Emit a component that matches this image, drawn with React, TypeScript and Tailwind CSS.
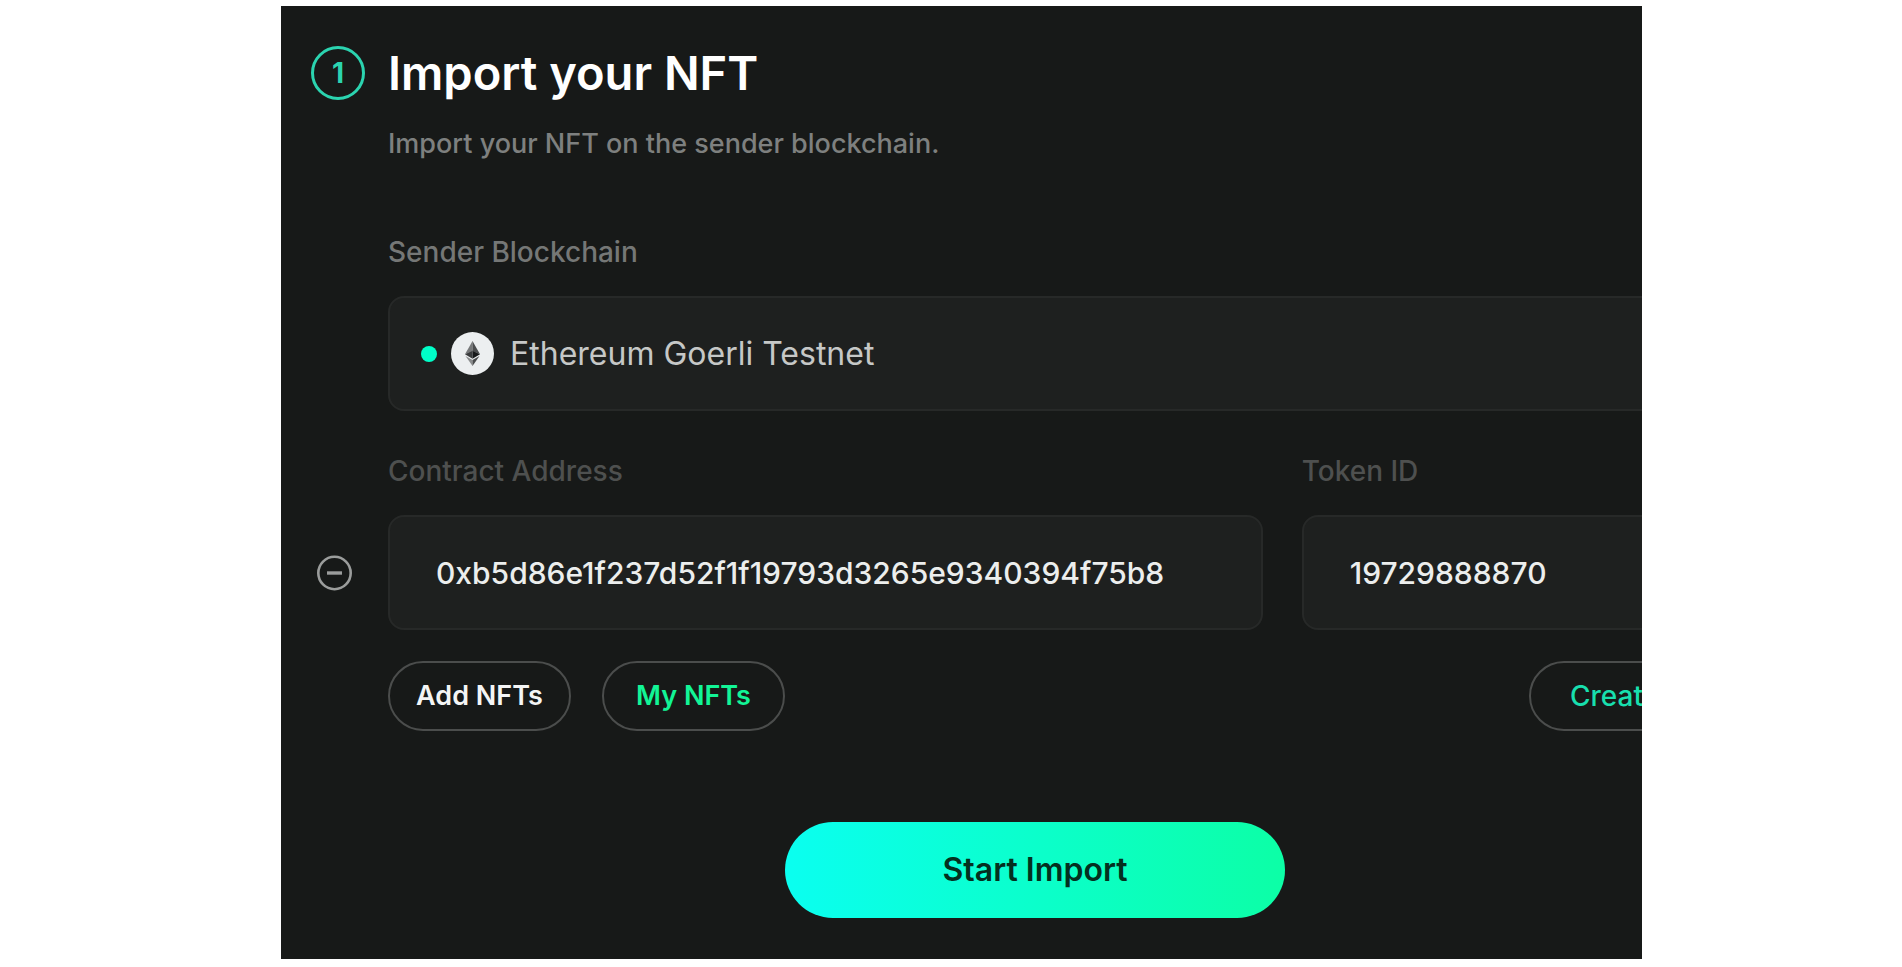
import { useState } from 'react'
import type { ReactNode } from 'react'

const FIELD = 'h-[115px] w-full rounded-2xl border-2 border-[#272928] bg-[#1e201f]'

interface TextFieldProps {
  id: string
  label: string
  value: string
  onChange: (value: string) => void
}

function TextField({ id, label, value, onChange }: TextFieldProps) {
  return (
    <div className="min-w-0">
      <label htmlFor={id} className="mb-6 block text-[28px] font-medium leading-10 text-[#4e504f]">
        {label}
      </label>
      <input
        id={id}
        type="text"
        value={value}
        onChange={e => onChange(e.target.value)}
        className={`${FIELD} px-[46px] text-[30px] font-medium text-[#eceeed] outline-none focus-visible:border-[#3a3d3c]`}
      />
    </div>
  )
}

function PillButton({ children, className }: { children: ReactNode; className: string }) {
  return (
    <button
      type="button"
      className={`h-[70px] whitespace-nowrap rounded-full border-2 border-[#4b4d4c] ${className}`}
    >
      {children}
    </button>
  )
}

function EthereumIcon() {
  return (
    <svg aria-hidden="true" viewBox="0 0 43 43" className="h-[43px] w-[43px] flex-none">
      <circle cx="21.5" cy="21.5" r="21.5" fill="#eceff0" />
      <path d="M21.5 9 14 22.3l7.5-3.3z" fill="#77797a" />
      <path d="M21.5 9 29 22.3 21.5 19z" fill="#4c4e4f" />
      <path d="m14 22.3 7.5-3.5v8z" fill="#3a3c3d" />
      <path d="m29 22.3-7.5-3.5v8z" fill="#17191a" />
      <path d="m14.5 24 7 4V34z" fill="#8b8d8e" />
      <path d="m28.5 24-7 4V34z" fill="#4a4c4d" />
    </svg>
  )
}

export default function App() {
  const [address, setAddress] = useState('0xb5d86e1f237d52f1f19793d3265e9340394f75b8')
  const [tokenId, setTokenId] = useState('19729888870')

  return (
    <div className="bg-white pb-2 pl-[281px] pr-[260px] pt-1.5 font-[Inter,sans-serif]">
      <main className="overflow-hidden bg-[#171918] pb-[41px] pl-[30px] pt-10">
        {/* The form is wider than the panel, which clips its right edge */}
        <div className="-mr-10">
          <header className="flex gap-[23px]">
            <span className="flex h-[54px] w-[54px] flex-none items-center justify-center rounded-full border-[3px] border-[#2bd4b0] text-[28px] font-bold leading-none text-[#2bd4b0]">
              1
            </span>
            <div>
              <h1 className="text-[47px] font-semibold leading-[54px] text-white">Import your NFT</h1>
              <p className="mt-6 text-[27px] font-medium leading-10 text-[#7e807f]">
                Import your NFT on the sender blockchain.
              </p>
            </div>
          </header>

          <section className="mt-[68px] pl-[77px]">
            <h2 id="sender-label" className="mb-6 text-[28px] font-medium leading-10 text-[#757776]">
              Sender Blockchain
            </h2>
            <button
              type="button"
              aria-labelledby="sender-label sender-value"
              className={`${FIELD} flex items-center px-[31px] text-left`}
            >
              <span className="h-4 w-4 flex-none rounded-full bg-[#00ffc8]" />
              <span className="ml-3.5 flex items-center gap-4">
                <EthereumIcon />
                <span id="sender-value" className="text-[32px] text-[#c6c8c7]">
                  Ethereum Goerli Testnet
                </span>
              </span>
            </button>
          </section>

          <section className="mt-10 flex items-end">
            <div className="flex h-[115px] w-[77px] flex-none items-center pl-1.5">
              <button type="button" aria-label="Remove NFT" className="text-[#9b9d9c]">
                <svg viewBox="0 0 36 36" className="h-9 w-9" fill="none" stroke="currentColor">
                  <circle cx="17.5" cy="18" r="16.2" strokeWidth="2.6" />
                  <path d="M10 18h15" strokeWidth="3.4" />
                </svg>
              </button>
            </div>
            <div className="grid flex-1 grid-cols-[23fr_10fr] gap-[39px]">
              <TextField id="address" label="Contract Address" value={address} onChange={setAddress} />
              <TextField id="token-id" label="Token ID" value={tokenId} onChange={setTokenId} />
            </div>
          </section>

          <div className="mt-[31px] flex gap-[31px] pl-[77px]">
            <PillButton className="w-[183px] text-[27px] font-semibold text-[#f4f5f5]">Add NFTs</PillButton>
            <PillButton className="w-[183px] text-[27px] font-semibold text-[#12f596]">My NFTs</PillButton>
            <PillButton className="ml-auto w-[153px] pl-[39px] text-left text-[28px] font-medium text-[#18dfae]">
              Create
            </PillButton>
          </div>

          <div className="mt-[91px] flex justify-center pl-[77px]">
            <button
              type="button"
              className="h-24 w-[500px] rounded-full bg-linear-to-r/srgb from-[#0afff0] to-[#0cffa6] text-[32px] font-semibold text-[#04301f]"
            >
              Start Import
            </button>
          </div>
        </div>
      </main>
    </div>
  )
}
